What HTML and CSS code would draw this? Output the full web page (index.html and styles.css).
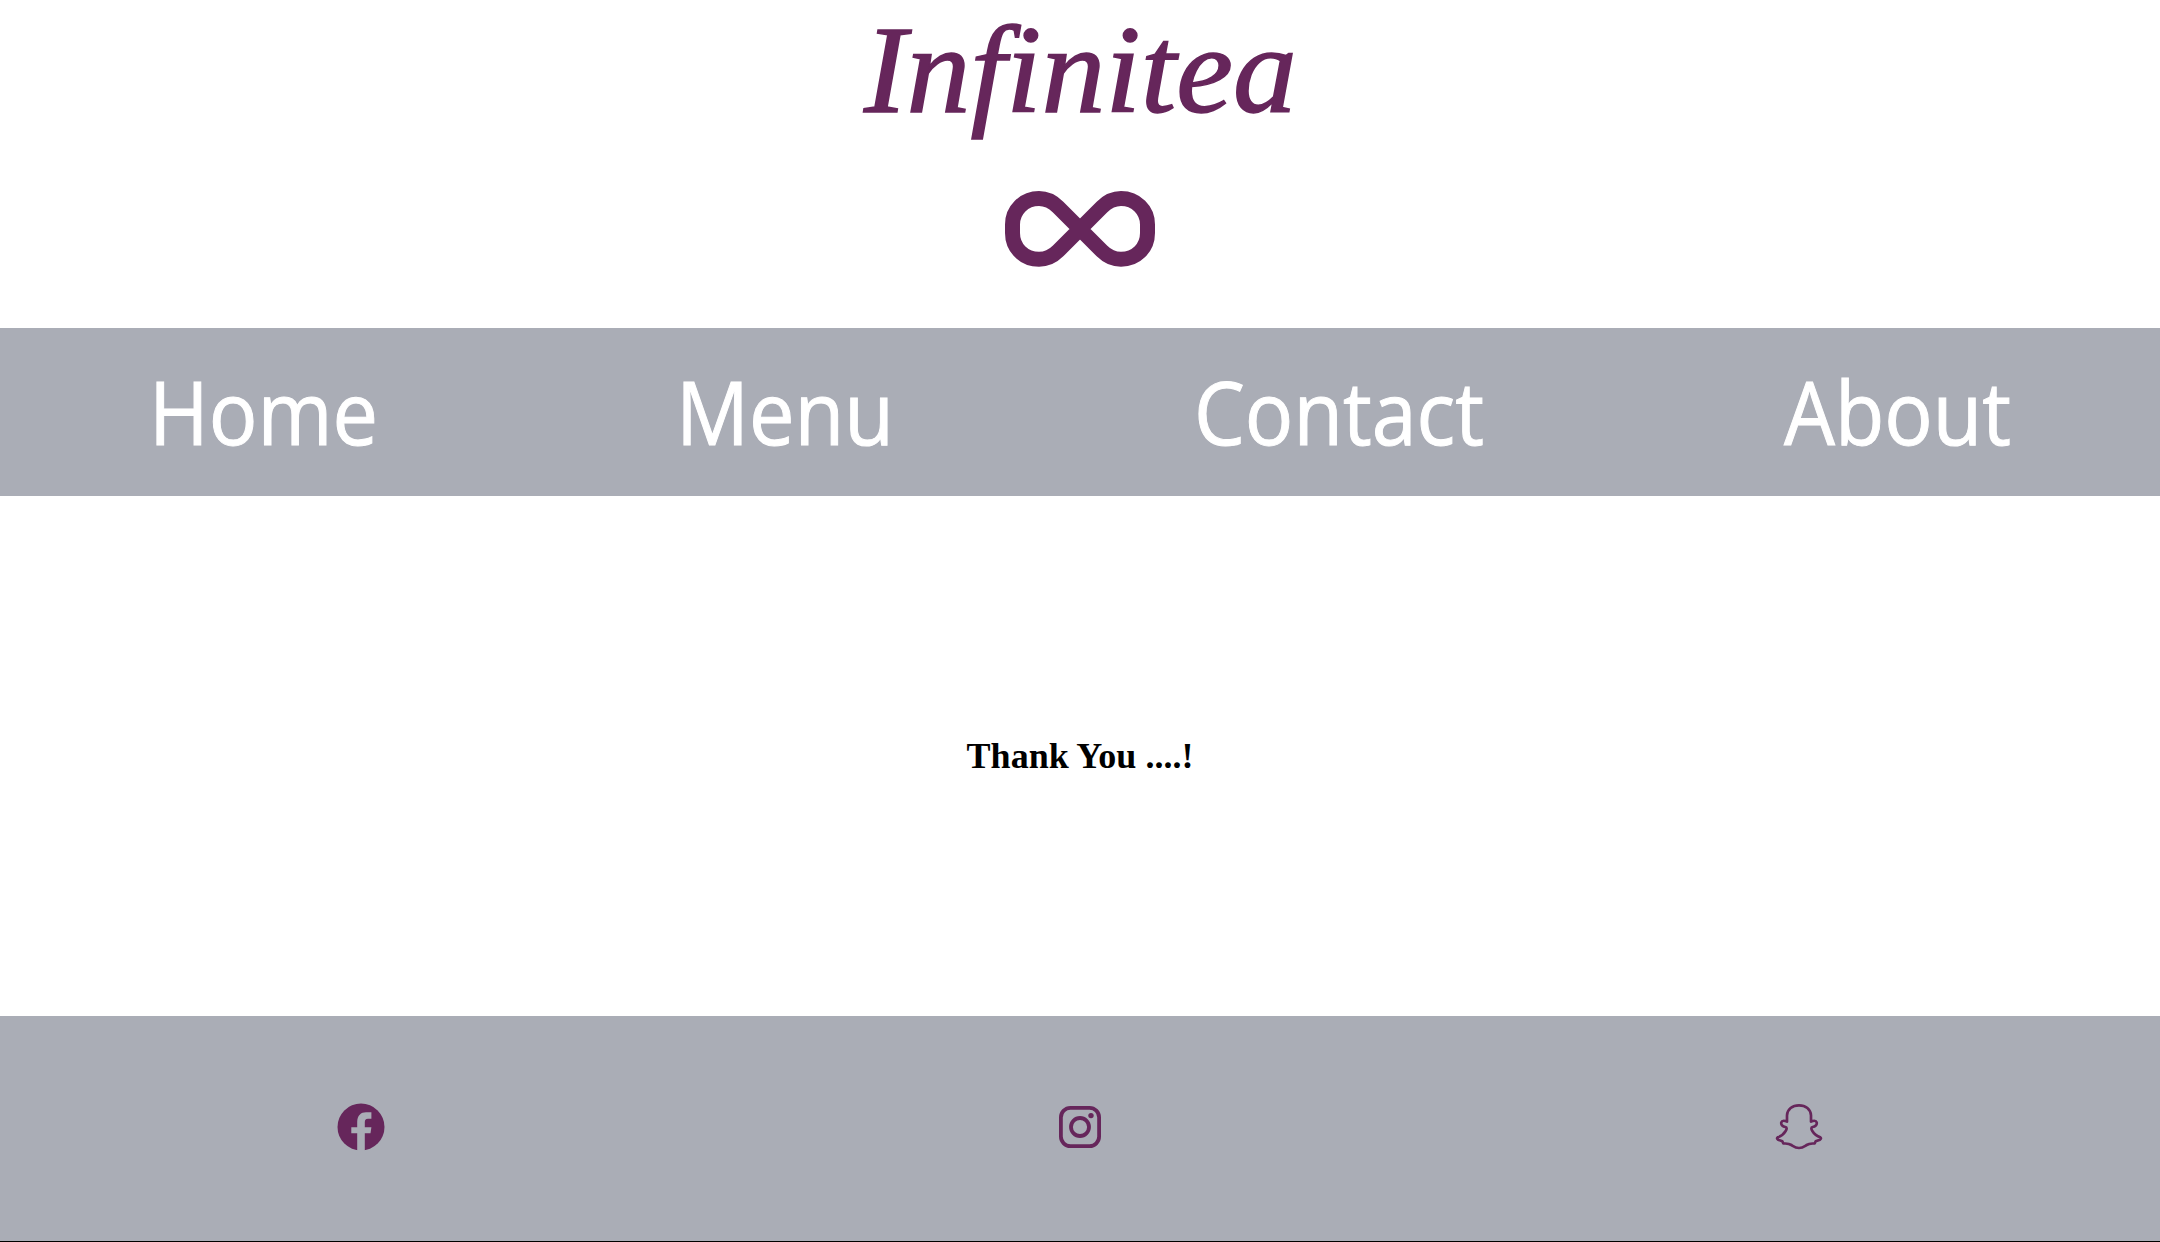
FILE: index.html
```html
<!DOCTYPE html>
<html lang="en">
<head>
<meta charset="utf-8">
<title>Infinitea</title>
<link rel="stylesheet" href="styles.css">
</head>
<body>
<header class="brand">
  <svg class="wordmark" width="460" height="160" viewBox="850 0 460 160">
    <text x="864" y="112" textLength="433" lengthAdjust="spacingAndGlyphs">Infinitea</text>
  </svg>
  <svg class="infinity" width="150" height="76" viewBox="0 0 150 76">
    <path d="M75 38 53 16C47 10 41 7.5 34 7.5 19 7.5 7.5 19 7.5 33.5V42C7.5 57 19 68.3 34 68.3 41 68.3 47 66 53 60L97 16C103 10 109 7.5 116 7.5 131 7.5 142.5 19 142.5 33.5V42C142.5 57 131 68.3 116 68.3 109 68.3 103 66 97 60Z"/>
  </svg>
</header>
<nav class="menu">
  <a href="#"><svg width="230" height="168"><text x="0" y="117" textLength="229" lengthAdjust="spacingAndGlyphs">Home</text></svg></a>
  <a href="#"><svg width="221" height="168"><text x="0" y="117" textLength="218" lengthAdjust="spacingAndGlyphs">Menu</text></svg></a>
  <a href="#"><svg width="293" height="168"><text x="0" y="117" textLength="290" lengthAdjust="spacingAndGlyphs">Contact</text></svg></a>
  <a href="#"><svg width="228" height="168"><text x="0" y="117" textLength="227" lengthAdjust="spacingAndGlyphs">About</text></svg></a>
</nav>
<main class="message"><h1>Thank You ....!</h1></main>
<footer class="social">
  <a href="#" aria-label="Facebook"><svg width="48" height="48" viewBox="0 0 48 48">
    <circle class="solid" cx="24" cy="24" r="23.5"/>
    <path class="cut" d="M20.2 48V30.3H14.3V24.2H20.2V19C20.2 12.5 24 9.3 29 9.3H34.4V15.8H31C28.5 15.8 27.8 17 27.8 19.3V24.2H34.4L33.5 30.3H27.8V48Z"/>
  </svg></a>
  <a href="#" aria-label="Instagram"><svg width="48" height="48" viewBox="0 0 48 48">
    <rect class="line" x="4.9" y="4.9" width="38.2" height="38.2" rx="9.5"/>
    <circle class="line" cx="24" cy="24" r="9"/>
    <circle class="solid" cx="35" cy="12.6" r="2.7"/>
  </svg></a>
  <a href="#" aria-label="Snapchat"><svg width="48" height="48" viewBox="45 69 144 144">
    <path class="ghost" d="M117 76C97 76 82 88 81 106V125C75 122 66 120 64 127 62 135 69 140 76 141 81 142 81 147 77 153 71 163 63 169 53 172 50 174 51 177 54 179L67 184 70 190C79 191 86 190 94 195 102 200 107 204 117 204S132 200 140 195C148 190 155 191 164 190L167 184 180 179C183 177 184 174 181 172 171 169 163 163 157 153 153 147 153 142 158 141 165 140 172 135 170 127 168 120 159 122 153 125V106C152 88 137 76 117 76Z"/>
  </svg></a>
</footer>
</body>
</html>
```
FILE: styles.css
```css
* { box-sizing: border-box; }
body {
  margin: 0;
  min-height: 1242px;
  display: flex;
  flex-direction: column;
  background: #fff;
}
svg { display: block; overflow: visible; }
.brand {
  height: 328px;
  display: flex;
  flex-direction: column;
  align-items: center;
  gap: 31px;
}
.wordmark text {
  font-family: "Liberation Serif", serif;
  font-size: 124px;
  font-style: italic;
  fill: #66265b;
  stroke: #66265b;
  stroke-width: 1.5px;
}
.infinity path { fill: none; stroke: #66265b; stroke-width: 15px; }
.menu {
  height: 168px;
  display: flex;
  justify-content: space-around;
  background: #aaadb6;
}
.menu a { text-decoration: none; }
.menu text {
  font: 500 87px "Open Sans", sans-serif;
  fill: #fff;
  stroke: #fff;
  stroke-width: 1px;
}
.message {
  flex: 1;
  display: flex;
  align-items: center;
  justify-content: center;
}
.message h1 {
  margin: 0;
  font: bold 36px "Liberation Serif", serif;
  color: #000;
}
.social {
  height: 226px;
  padding-top: 87px;
  display: grid;
  grid-template-columns: repeat(3, 719px);
  justify-content: center;
  justify-items: center;
  align-items: start;
  background: #aaadb6;
  border-bottom: 1px solid #000;
}
.solid { fill: #66265b; }
.cut { fill: #aaadb6; }
.line { fill: none; stroke: #66265b; stroke-width: 3.8px; }
.ghost { fill: none; stroke: #66265b; stroke-width: 8px; stroke-linejoin: round; }
```
